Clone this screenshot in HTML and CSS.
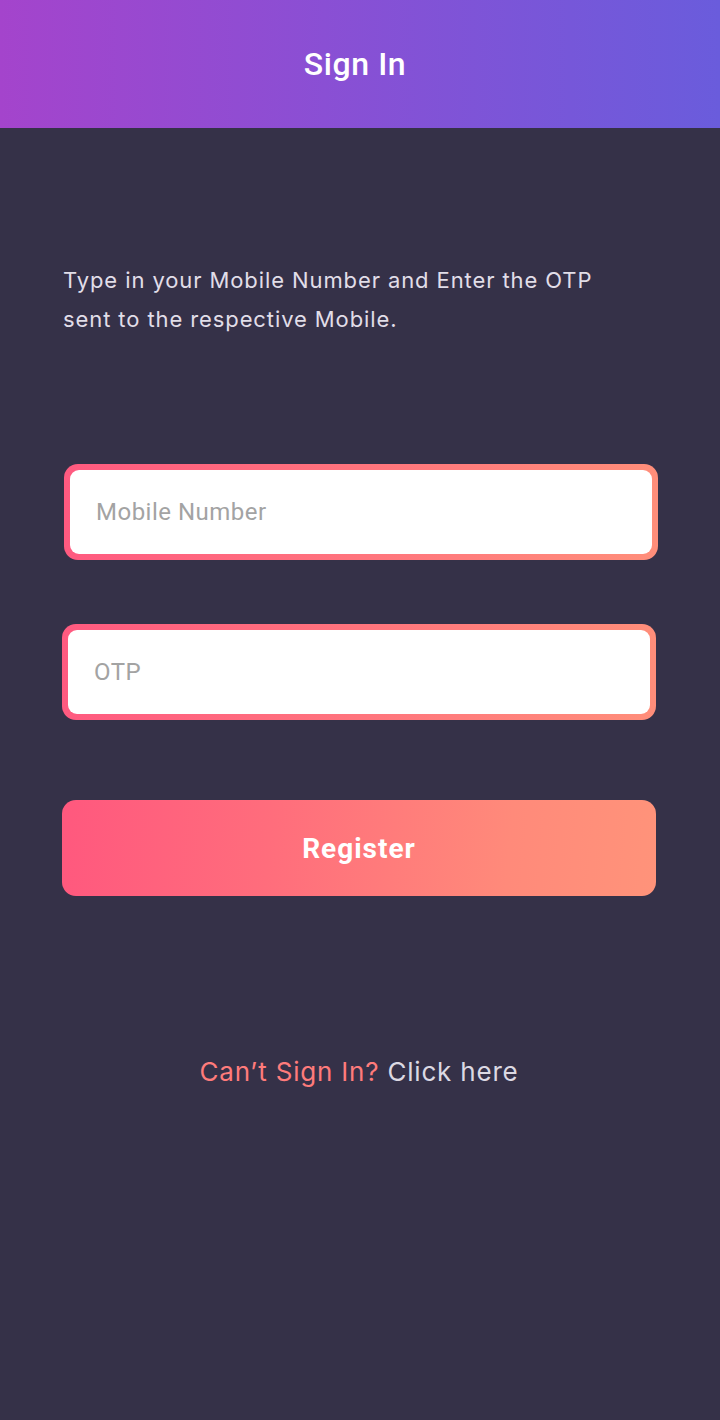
FILE: index.html
```html
<!DOCTYPE html>
<html lang="en">
<head>
<meta charset="utf-8">
<title>Sign In</title>
<link rel="stylesheet" href="styles.css">
</head>
<body>
<header class="topbar">
  <h1 class="topbar-title">Sign In</h1>
</header>
<main class="content">
  <p class="intro">Type in your Mobile Number and Enter the OTP sent to the respective Mobile.</p>
  <form class="form">
    <div class="field field--first">
      <input class="field-input" type="text" placeholder="Mobile Number">
    </div>
    <div class="field field--second">
      <input class="field-input" type="text" placeholder="OTP">
    </div>
    <button class="btn" type="button">Register</button>
  </form>
  <p class="help"><span class="help-accent">Can’t Sign In?</span> Click here</p>
</main>
</body>
</html>
```
FILE: styles.css
```css
* { box-sizing: border-box; }
html, body {
  margin: 0;
  padding: 0;
  background: #353148;
  height: 100%;
}
body {
  font-family: Inter, "Noto Sans", sans-serif;
  min-height: 1420px;
}
.topbar {
  height: 128px;
  background: linear-gradient(90deg, #a444cc 0%, #8a4fd4 45%, #6a5cdc 100%);
  display: flex;
  align-items: center;
  justify-content: center;
}
.topbar-title {
  margin: 0;
  font-family: Roboto, "Liberation Sans", sans-serif;
  font-weight: 500;
  font-size: 32px;
  letter-spacing: 0.6px;
  color: #ffffff;
  padding-right: 10px;
  padding-top: 0;
}
.content {
  padding: 0 0 0 62px;
  width: 656px;
}
.intro {
  margin: 133px 0 0 1px;
  font-size: 22px;
  letter-spacing: 0.9px;
  line-height: 39px;
  color: #e1dee8;
  width: 560px;
}
.form {
  display: flex;
  flex-direction: column;
  margin-top: 125px;
}
.field {
  width: 594px;
  height: 96px;
  border-radius: 14px;
  padding: 6px;
  background: linear-gradient(90deg, #ff5a80 0%, #ff8e7a 100%);
}
.field--first { margin-left: 2px; }
.field--second { margin-top: 64px; }
.field-input {
  width: 100%;
  height: 100%;
  border: 0;
  outline: none;
  border-radius: 9px;
  background: #ffffff;
  font-family: Roboto, "Liberation Sans", sans-serif;
  font-size: 24px;
  letter-spacing: 0.5px;
  padding: 0 0 0 26px;
  color: #333;
}
.field-input::placeholder { color: #a3a3a3; }
.btn {
  margin-top: 80px;
  width: 594px;
  height: 96px;
  border: 0;
  border-radius: 14px;
  background: linear-gradient(95deg, #ff587e 0%, #ff6d7c 35%, #ff8a7a 75%, #ff937a 100%);
  color: #ffffff;
  font-family: Roboto, "Liberation Sans", sans-serif;
  font-weight: 700;
  font-size: 28px;
  letter-spacing: 1px;
  padding: 0;
}
.help {
  margin: 160px 0 0 0;
  width: 594px;
  text-align: center;
  font-size: 26px;
  letter-spacing: 0.8px;
  line-height: 32px;
  color: #dcd9e3;
}
.help-accent { color: #ff7b7b; }
```
